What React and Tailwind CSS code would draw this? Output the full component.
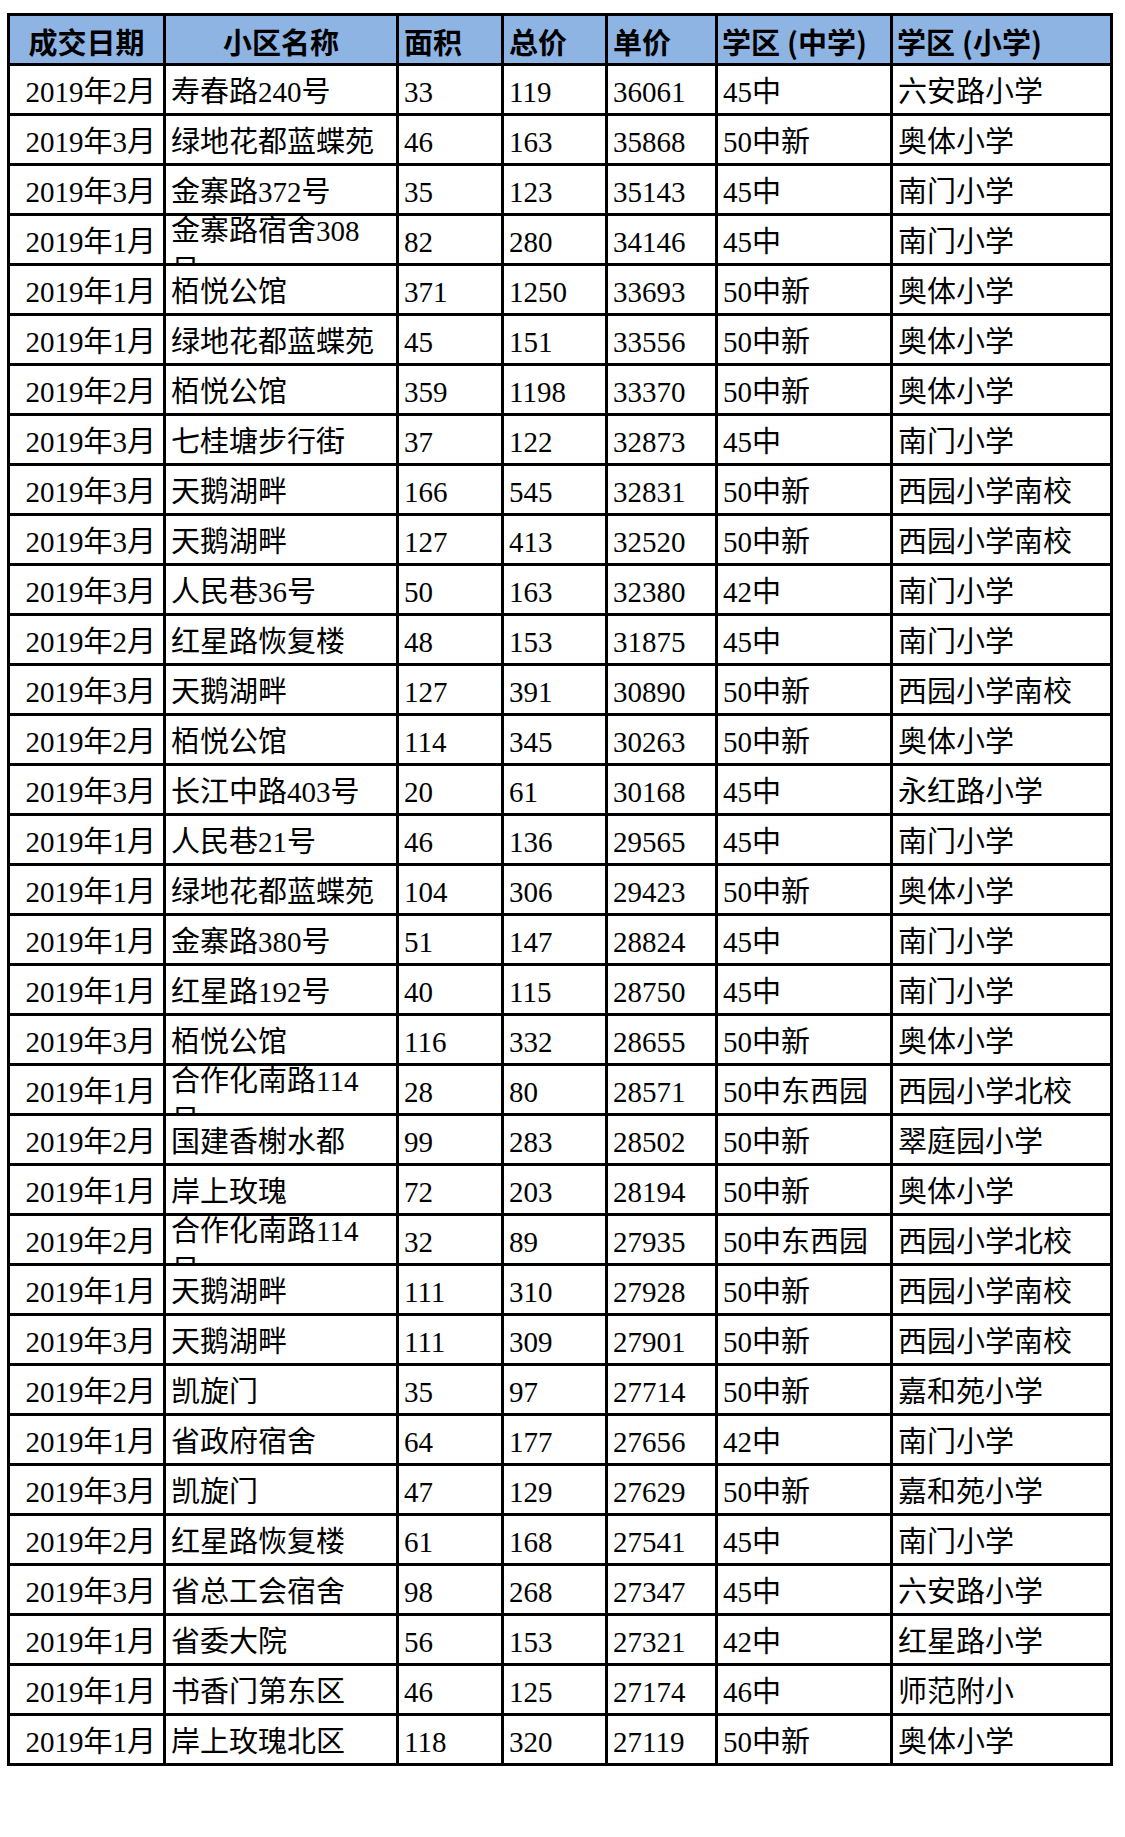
const headers = [
    { label: "成交日期", align: "justify-center" },
    { label: "小区名称", align: "justify-center" },
    { label: "面积", align: "justify-start pl-[5px]" },
    { label: "总价", align: "justify-start pl-[5px]" },
    { label: "单价", align: "justify-start pl-[5px]" },
    { label: "学区", paren: "中学", align: "justify-start pl-[4px]" },
    { label: "学区", paren: "小学", align: "justify-start pl-[4px]" },
];

// [date, name, area, total, unit, middle school, primary school, wrapped name lines]
const rows = [
    ["2019年2月", "寿春路240号", "33", "119", "36061", "45中", "六安路小学"],
    ["2019年3月", "绿地花都蓝蝶苑", "46", "163", "35868", "50中新", "奥体小学"],
    ["2019年3月", "金寨路372号", "35", "123", "35143", "45中", "南门小学"],
    ["2019年1月", "金寨路宿舍308号", "82", "280", "34146", "45中", "南门小学", ["金寨路宿舍308", "号"]],
    ["2019年1月", "栢悦公馆", "371", "1250", "33693", "50中新", "奥体小学"],
    ["2019年1月", "绿地花都蓝蝶苑", "45", "151", "33556", "50中新", "奥体小学"],
    ["2019年2月", "栢悦公馆", "359", "1198", "33370", "50中新", "奥体小学"],
    ["2019年3月", "七桂塘步行街", "37", "122", "32873", "45中", "南门小学"],
    ["2019年3月", "天鹅湖畔", "166", "545", "32831", "50中新", "西园小学南校"],
    ["2019年3月", "天鹅湖畔", "127", "413", "32520", "50中新", "西园小学南校"],
    ["2019年3月", "人民巷36号", "50", "163", "32380", "42中", "南门小学"],
    ["2019年2月", "红星路恢复楼", "48", "153", "31875", "45中", "南门小学"],
    ["2019年3月", "天鹅湖畔", "127", "391", "30890", "50中新", "西园小学南校"],
    ["2019年2月", "栢悦公馆", "114", "345", "30263", "50中新", "奥体小学"],
    ["2019年3月", "长江中路403号", "20", "61", "30168", "45中", "永红路小学"],
    ["2019年1月", "人民巷21号", "46", "136", "29565", "45中", "南门小学"],
    ["2019年1月", "绿地花都蓝蝶苑", "104", "306", "29423", "50中新", "奥体小学"],
    ["2019年1月", "金寨路380号", "51", "147", "28824", "45中", "南门小学"],
    ["2019年1月", "红星路192号", "40", "115", "28750", "45中", "南门小学"],
    ["2019年3月", "栢悦公馆", "116", "332", "28655", "50中新", "奥体小学"],
    ["2019年1月", "合作化南路114号", "28", "80", "28571", "50中东西园", "西园小学北校", ["合作化南路114", "号"]],
    ["2019年2月", "国建香榭水都", "99", "283", "28502", "50中新", "翠庭园小学"],
    ["2019年1月", "岸上玫瑰", "72", "203", "28194", "50中新", "奥体小学"],
    ["2019年2月", "合作化南路114号", "32", "89", "27935", "50中东西园", "西园小学北校", ["合作化南路114", "号"]],
    ["2019年1月", "天鹅湖畔", "111", "310", "27928", "50中新", "西园小学南校"],
    ["2019年3月", "天鹅湖畔", "111", "309", "27901", "50中新", "西园小学南校"],
    ["2019年2月", "凯旋门", "35", "97", "27714", "50中新", "嘉和苑小学"],
    ["2019年1月", "省政府宿舍", "64", "177", "27656", "42中", "南门小学"],
    ["2019年3月", "凯旋门", "47", "129", "27629", "50中新", "嘉和苑小学"],
    ["2019年2月", "红星路恢复楼", "61", "168", "27541", "45中", "南门小学"],
    ["2019年3月", "省总工会宿舍", "98", "268", "27347", "45中", "六安路小学"],
    ["2019年1月", "省委大院", "56", "153", "27321", "42中", "红星路小学"],
    ["2019年1月", "书香门第东区", "46", "125", "27174", "46中", "师范附小"],
    ["2019年1月", "岸上玫瑰北区", "118", "320", "27119", "50中新", "奥体小学"],
];

const gridCols = "grid grid-cols-[156px_233px_105px_104px_110px_175px_220px]";
const cellBase = "h-[50px] border-r-[3px] border-b-[3px] border-black overflow-hidden";

const App = () => {
    return (
        <div className="min-h-[1837px] w-[1125px] bg-white pt-[13px] pl-[7px]">
            <div
                className="w-[1106px] border-l-[3px] border-t-[3px] border-black text-black"
                style={{ fontFamily: '"Liberation Serif", "Noto Sans CJK SC", serif' }}
            >
                {/* header */}
                <div className={gridCols}>
                    {headers.map((h, i) => (
                        <div
                            key={i}
                            className={`${cellBase} bg-[#8db4e2] flex items-center pt-[3px] ${h.align} text-[29px] font-bold`}
                            style={{ fontFamily: '"Noto Sans CJK SC", sans-serif' }}
                        >
                            <span className="leading-none whitespace-nowrap">
                                {h.label}
                                {h.paren && (
                                    <>
                                        <span className="ml-[7px]">(</span>
                                        {h.paren})
                                    </>
                                )}
                            </span>
                        </div>
                    ))}
                </div>

                {rows.map((row, index) => (
                    <div key={index} className={gridCols}>
                        <div className={`${cellBase} flex items-center justify-end pr-[7px] pt-[6px] text-[29px]`}>
                            <span className="whitespace-nowrap leading-none">{row[0]}</span>
                        </div>
                        {row[7] ? (
                            <div className={`${cellBase} pl-[5px] text-[29px]`}>
                                <div className="-mt-[5px] leading-[40px]">
                                    {row[7].map((line, i) => (
                                        <div key={i} className="whitespace-nowrap">{line}</div>
                                    ))}
                                </div>
                            </div>
                        ) : (
                            <div className={`${cellBase} flex items-center pl-[5px] pt-[6px] text-[29px]`}>
                                <span className="whitespace-nowrap leading-none">{row[1]}</span>
                            </div>
                        )}
                        {row.slice(2, 7).map((val, i) => (
                            <div key={i} className={`${cellBase} flex items-center pl-[5px] pt-[6px] text-[29px]`}>
                                <span className="whitespace-nowrap leading-none">{val}</span>
                            </div>
                        ))}
                    </div>
                ))}
            </div>
        </div>
    );
};

export default App;
